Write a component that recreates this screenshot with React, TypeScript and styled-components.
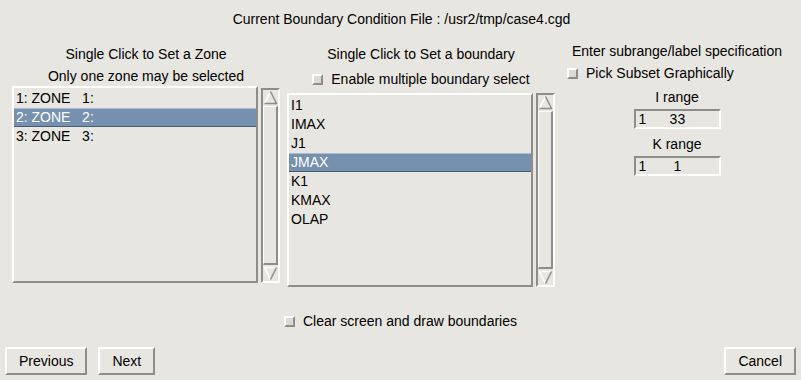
import styled, { createGlobalStyle } from 'styled-components'

const BG = '#e8e6e1'
const SHADOW = '#8e8d89'
const LIGHT = '#ffffff'
const SELECT = '#7690b0'

const Global = createGlobalStyle`
	html, body {
		margin: 0;
		padding: 0;
		background: ${BG};
	}
	body {
		font-family: 'Liberation Sans', Arial, sans-serif;
		font-size: 14px;
		color: #000;
	}
`

const Window = styled.div`
	width: 801px;
	height: 380px;
	display: flex;
	flex-direction: column;
	background: ${BG};
	overflow: hidden;
`

const Title = styled.div`
	margin-top: 11px;
	line-height: 16px;
	text-align: center;
	padding-left: 2px;
`

const Columns = styled.div`
	display: flex;
	margin-top: 14px;
	align-items: flex-start;
`

const Column = styled.div<{ $left: number; $width: number; $top?: number }>`
	display: flex;
	flex-direction: column;
	margin-left: ${({ $left }) => $left}px;
	width: ${({ $width }) => $width}px;
	padding-top: ${({ $top }) => $top ?? 3}px;
`

const Label = styled.div<{ $mt?: number }>`
	line-height: 20px;
	text-align: center;
	white-space: nowrap;
	margin-top: ${({ $mt }) => $mt ?? 0}px;
`

const CheckRow = styled.label<{ $mt?: number; $center?: boolean }>`
	display: flex;
	align-items: center;
	justify-content: ${({ $center }) => ($center ? 'center' : 'flex-start')};
	gap: 8px;
	height: 20px;
	margin-top: ${({ $mt }) => $mt ?? 0}px;
	white-space: nowrap;
`

const Check = styled.span`
	display: inline-block;
	box-sizing: border-box;
	width: 11px;
	height: 11px;
	background: #dcdad5;
	border: 2px solid;
	border-color: ${LIGHT} ${SHADOW} ${SHADOW} ${LIGHT};
`

const ListArea = styled.div<{ $mt: number; $height: number }>`
	display: flex;
	gap: 3px;
	margin-top: ${({ $mt }) => $mt}px;
	height: ${({ $height }) => $height}px;
`

const ListBox = styled.ul`
	flex: 1;
	margin: 0;
	padding: 1px 0 0;
	list-style: none;
	border: 2px solid;
	border-color: ${LIGHT} ${SHADOW} ${SHADOW} ${LIGHT};
	background: ${BG};
`

const Item = styled.li<{ $selected?: boolean }>`
	height: 19px;
	padding-left: 2px;
	white-space: pre;
	box-sizing: border-box;
	background: ${({ $selected }) => ($selected ? SELECT : 'transparent')};
	color: ${({ $selected }) => ($selected ? '#fff' : '#000')};
	border-top: 1px solid ${({ $selected }) => ($selected ? '#a8bcd6' : 'transparent')};
	border-bottom: 1px solid ${({ $selected }) => ($selected ? '#4a5a70' : 'transparent')};
	line-height: 17px;
`

const ScrollTrack = styled.div<{ $mt?: number }>`
	box-sizing: border-box;
	width: 19px;
	margin-top: ${({ $mt }) => $mt ?? 0}px;
	display: flex;
	flex-direction: column;
	border: 2px solid;
	border-color: ${SHADOW} ${LIGHT} ${LIGHT} ${SHADOW};
`

const Arrow = styled.svg`
	display: block;
	width: 15px;
	height: 15px;
	flex: none;
`

const Thumb = styled.div`
	flex: 1;
	margin: 1px 0;
	border: 2px solid;
	border-color: ${LIGHT} ${SHADOW} ${SHADOW} ${LIGHT};
	border-left-width: 1px;
	border-top-width: 1px;
`

const Field = styled.div`
	box-sizing: border-box;
	align-self: center;
	width: 87px;
	height: 20px;
	margin-top: 2px;
	padding-left: 3px;
	line-height: 16px;
	white-space: pre;
	border: 2px solid;
	border-color: ${SHADOW} ${LIGHT} ${LIGHT} ${SHADOW};
`

const Footer = styled.div`
	display: flex;
	align-items: center;
	padding: 0 5px;
	margin-top: 16px;
	gap: 11px;
`

const Button = styled.button<{ $push?: boolean }>`
	box-sizing: border-box;
	height: 28px;
	padding: 0 12px;
	font: inherit;
	color: #000;
	background: ${BG};
	border: 2px solid;
	border-color: ${LIGHT} ${SHADOW} ${SHADOW} ${LIGHT};
	margin-left: ${({ $push }) => ($push ? 'auto' : '0')};
`

const UpArrow = () => (
	<Arrow viewBox="0 0 15 15">
		<polyline points="1.5,13.5 7.5,1.5" fill="none" stroke={LIGHT} strokeWidth="1.5" />
		<polyline points="7.5,1.5 13.5,13.5 1.5,13.5" fill="none" stroke={SHADOW} strokeWidth="1.5" />
	</Arrow>
)

const DownArrow = () => (
	<Arrow viewBox="0 0 15 15">
		<polyline points="7.5,13.5 1.5,1.5 13.5,1.5" fill="none" stroke={LIGHT} strokeWidth="1.5" />
		<polyline points="13.5,1.5 7.5,13.5" fill="none" stroke={SHADOW} strokeWidth="1.5" />
	</Arrow>
)

const ScrollBar = ({ mt }: { mt?: number }) => (
	<ScrollTrack $mt={mt}>
		<UpArrow />
		<Thumb />
		<DownArrow />
	</ScrollTrack>
)

const zones = ['1: ZONE   1:', '2: ZONE   2:', '3: ZONE   3:']
const bounds = ['I1', 'IMAX', 'J1', 'JMAX', 'K1', 'KMAX', 'OLAP']

const App = () => {
	return (
		<Window>
			<Global />
			<Title>Current Boundary Condition File : /usr2/tmp/case4.cgd</Title>
			<Columns>
				<Column $left={12} $width={268}>
					<Label>Single Click to Set a Zone</Label>
					<Label $mt={2}>Only one zone may be selected</Label>
					<ListArea $mt={0} $height={197}>
						<ListBox>
							{zones.map((z, i) => (
								<Item key={z} $selected={i === 1}>
									{z}
								</Item>
							))}
						</ListBox>
						<ScrollBar mt={2} />
					</ListArea>
				</Column>
				<Column $left={7} $width={268}>
					<Label>Single Click to Set a boundary</Label>
					<CheckRow $mt={5} $center>
						<Check />
						Enable multiple boundary select
					</CheckRow>
					<ListArea $mt={4} $height={194}>
						<ListBox>
							{bounds.map((b, i) => (
								<Item key={b} $selected={i === 3}>
									{b}
								</Item>
							))}
						</ListBox>
						<ScrollBar />
					</ListArea>
				</Column>
				<Column $left={12} $width={220} $top={0}>
					<Label>Enter subrange/label specification</Label>
					<CheckRow $mt={2}>
						<Check />
						Pick Subset Graphically
					</CheckRow>
					<Label $mt={4}>I range</Label>
					<Field>{'1      33'}</Field>
					<Label $mt={5}>K range</Label>
					<Field>{'1       1'}</Field>
				</Column>
			</Columns>
			<CheckRow $mt={24} $center>
				<Check />
				Clear screen and draw boundaries
			</CheckRow>
			<Footer>
				<Button>Previous</Button>
				<Button>Next</Button>
				<Button $push>Cancel</Button>
			</Footer>
		</Window>
	)
}

export default App
